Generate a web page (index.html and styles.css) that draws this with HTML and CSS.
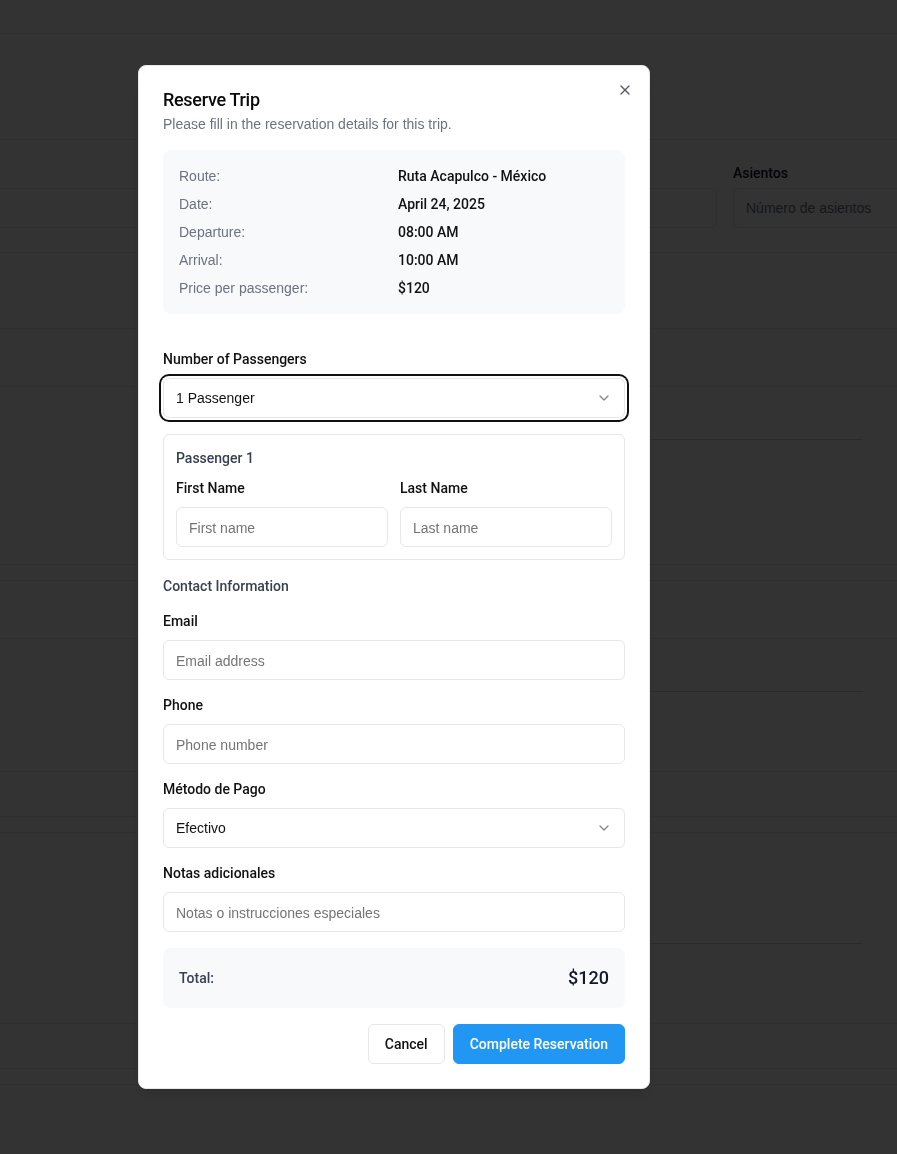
FILE: index.html
```html
<!DOCTYPE html>
<html lang="en">
<head>
<meta charset="utf-8">
<title>Reserve Trip</title>
<link rel="stylesheet" href="styles.css">
</head>
<body>
<div class="page">
  <header class="topbar"></header>
  <section class="hero"></section>
  <section class="filters">
    <div class="filter-grid">
      <div class="filter-field">
        <span class="filter-label"></span>
        <div class="filter-input"></div>
      </div>
      <div class="filter-field">
        <span class="filter-label"></span>
        <div class="filter-input"></div>
      </div>
      <div class="filter-field">
        <span class="filter-label">Asientos</span>
        <div class="filter-input"><span class="filter-ph">Número de asientos</span></div>
      </div>
    </div>
  </section>
  <div class="trip-list">
    <article class="trip">
      <div class="trip-head"></div>
      <div class="trip-body"></div>
      <div class="trip-divider"></div>
      <div class="trip-main trip-main-plain"></div>
      <div class="trip-foot"></div>
    </article>
    <article class="trip">
      <div class="trip-head"></div>
      <div class="trip-body"></div>
      <div class="trip-divider"></div>
      <div class="trip-main"></div>
      <div class="trip-foot"></div>
    </article>
    <article class="trip">
      <div class="trip-head trip-head-plain"></div>
      <div class="trip-body"></div>
      <div class="trip-divider"></div>
      <div class="trip-main"></div>
      <div class="trip-foot"></div>
    </article>
    <article class="trip trip-last">
      <div class="trip-head trip-head-plain"></div>
    </article>
  </div>
</div>

<div class="overlay">
  <div class="modal" role="dialog" aria-labelledby="dlg-title">
    <button class="close" aria-label="Close">
      <svg width="16" height="16" viewBox="0 0 24 24" fill="none" stroke="currentColor" stroke-width="2" stroke-linecap="round" stroke-linejoin="round"><path d="M18 6 6 18"/><path d="m6 6 12 12"/></svg>
    </button>
    <h2 class="title" id="dlg-title">Reserve Trip</h2>
    <p class="desc">Please fill in the reservation details for this trip.</p>

    <div class="info">
      <span class="info-label">Route:</span><span class="info-value">Ruta Acapulco - México</span>
      <span class="info-label">Date:</span><span class="info-value">April 24, 2025</span>
      <span class="info-label">Departure:</span><span class="info-value">08:00 AM</span>
      <span class="info-label">Arrival:</span><span class="info-value">10:00 AM</span>
      <span class="info-label">Price per passenger:</span><span class="info-value">$120</span>
    </div>

    <div class="field field-passengers">
      <label class="label">Number of Passengers</label>
      <div class="select focused">
        <span>1 Passenger</span>
        <svg class="chev" width="16" height="16" viewBox="0 0 24 24" fill="none" stroke="currentColor" stroke-width="2" stroke-linecap="round" stroke-linejoin="round"><path d="m6 9 6 6 6-6"/></svg>
      </div>
    </div>

    <div class="passenger">
      <div class="passenger-title">Passenger 1</div>
      <div class="name-grid">
        <div>
          <label class="label">First Name</label>
          <input class="input" placeholder="First name">
        </div>
        <div>
          <label class="label">Last Name</label>
          <input class="input" placeholder="Last name">
        </div>
      </div>
    </div>

    <div class="section-title">Contact Information</div>

    <div class="field">
      <label class="label">Email</label>
      <input class="input" placeholder="Email address">
    </div>
    <div class="field">
      <label class="label">Phone</label>
      <input class="input" placeholder="Phone number">
    </div>
    <div class="field">
      <label class="label">Método de Pago</label>
      <div class="select">
        <span>Efectivo</span>
        <svg class="chev" width="16" height="16" viewBox="0 0 24 24" fill="none" stroke="currentColor" stroke-width="2" stroke-linecap="round" stroke-linejoin="round"><path d="m6 9 6 6 6-6"/></svg>
      </div>
    </div>
    <div class="field">
      <label class="label">Notas adicionales</label>
      <input class="input" placeholder="Notas o instrucciones especiales">
    </div>

    <div class="total">
      <span class="total-label">Total:</span>
      <span class="total-value">$120</span>
    </div>

    <div class="actions">
      <button class="btn btn-outline">Cancel</button>
      <button class="btn btn-primary">Complete Reservation</button>
    </div>
  </div>
</div>
</body>
</html>
```
FILE: styles.css
```css
* { box-sizing: border-box; }

html, body {
  margin: 0;
  height: 100%;
}

body {
  font-family: "Liberation Sans", Arial, sans-serif;
  font-size: 14px;
  line-height: 20px;
  color: #111827;
  background: #ffffff;
  overflow: hidden;
}

/* ---------- background page ---------- */
.page { width: 100%; }

.topbar {
  height: 34px;
  border-bottom: 1px solid #e5e7eb;
}

.hero {
  height: 106px;
  border-bottom: 1px solid #e5e7eb;
}

.filters {
  height: 113px;
  border-bottom: 1px solid #e5e7eb;
  overflow: hidden;
  padding-top: 23px;
}

.filter-grid {
  width: 953px;
  margin-left: -20px;
  display: grid;
  grid-template-columns: 1fr 1fr 200px;
  gap: 16px;
}

.filter-label {
  display: block;
  height: 20px;
  font-family: Roboto, "Liberation Sans", sans-serif;
  font-weight: 500;
  color: #111827;
  margin-bottom: 5px;
}

.filter-input {
  height: 40px;
  border: 1px solid #e5e7eb;
  border-radius: 6px;
  padding: 0 12px;
  display: flex;
  align-items: center;
}

.filter-ph { color: #6b7280; }

.trip-list { padding-top: 75px; }

.trip {
  border-top: 1px solid #e5e7eb;
  border-bottom: 1px solid #e5e7eb;
  margin-bottom: 15px;
}

.trip-last { border-bottom: 0; }

.trip-head {
  height: 58px;
  border-bottom: 1px solid #e5e7eb;
}

.trip-head-plain { border-bottom-color: transparent; }

.trip-body { height: 52px; }

.trip-divider {
  height: 1px;
  margin: 0 34px 0 320px;
  background: #cfd3d9;
}

.trip-main {
  height: 80px;
  border-bottom: 1px solid #e5e7eb;
}

.trip-main-plain { border-bottom-color: transparent; }

.trip-foot { height: 44px; }

/* ---------- overlay & dialog ---------- */
.overlay {
  position: fixed;
  inset: 0;
  background: rgba(0, 0, 0, 0.8);
  padding: 65px 0 0 138px;
}

.modal {
  position: relative;
  width: 512px;
  background: #ffffff;
  border: 1px solid #e5e7eb;
  border-radius: 8px;
  padding: 24px;
  box-shadow: 0 10px 15px -3px rgba(0,0,0,.1), 0 4px 6px -4px rgba(0,0,0,.1);
}

.close {
  position: absolute;
  top: 16px;
  right: 16px;
  width: 16px;
  height: 16px;
  padding: 0;
  border: 0;
  background: none;
  color: #111827;
  opacity: 0.7;
  display: flex;
}

.title {
  margin: 0;
  font-family: Roboto, "Liberation Sans", sans-serif;
  font-size: 18px;
  line-height: 20px;
  font-weight: 500;
  letter-spacing: -0.3px;
  color: #0a0a0a;
}

.desc {
  margin: 4px 0 0;
  color: #6b7280;
}

.info {
  margin-top: 16px;
  background: #f8f9fb;
  border-radius: 8px;
  padding: 16px;
  display: grid;
  grid-template-columns: 1fr 1fr;
  gap: 8px;
}

.info-label { color: #6b7280; }

.info-value {
  font-family: Roboto, "Liberation Sans", sans-serif;
  font-weight: 500;
  color: #111111;
}

.label {
  display: block;
  margin-bottom: 9px;
  font-family: Roboto, "Liberation Sans", sans-serif;
  font-weight: 500;
  color: #111111;
}

.field { margin-top: 15px; }

.field-passengers { margin-top: 35px; }

.select {
  height: 40px;
  border: 1px solid #e5e7eb;
  border-radius: 6px;
  padding: 0 12px;
  display: flex;
  align-items: center;
  justify-content: space-between;
  background: #fff;
  color: #111111;
}

.select.focused {
  box-shadow: 0 0 0 2px #ffffff, 0 0 0 4px #101010;
}

.chev {
  color: #111;
  opacity: 0.5;
  flex: none;
}

.input {
  display: block;
  width: 100%;
  height: 40px;
  border: 1px solid #e5e7eb;
  border-radius: 6px;
  padding: 1px 12px 0;
  font-family: "Liberation Sans", Arial, sans-serif;
  font-size: 14px;
  color: #111111;
  background: #fff;
  outline: none;
}

.input::placeholder { color: #757575; }

.passenger {
  margin-top: 16px;
  border: 1px solid #e5e7eb;
  border-radius: 6px;
  padding: 13px 12px 12px;
}

.passenger-title {
  margin-bottom: 10px;
  font-family: Roboto, "Liberation Sans", sans-serif;
  font-weight: 500;
  color: #374151;
}

.name-grid {
  display: grid;
  grid-template-columns: 1fr 1fr;
  gap: 12px;
}

.section-title {
  margin-top: 16px;
  font-family: Roboto, "Liberation Sans", sans-serif;
  font-weight: 500;
  color: #374151;
}

.total {
  margin-top: 16px;
  background: #f8f9fb;
  border-radius: 8px;
  padding: 16px;
  display: flex;
  align-items: center;
  justify-content: space-between;
}

.total-label {
  font-family: Roboto, "Liberation Sans", sans-serif;
  font-weight: 500;
  color: #374151;
}

.total-value {
  font-family: Roboto, "Liberation Sans", sans-serif;
  font-weight: 500;
  font-size: 18px;
  line-height: 28px;
  color: #111827;
}

.actions {
  margin-top: 16px;
  display: flex;
  justify-content: flex-end;
  gap: 8px;
}

.btn {
  height: 40px;
  padding: 0 16px;
  border-radius: 6px;
  font-family: Roboto, "Liberation Sans", sans-serif;
  font-weight: 500;
  font-size: 14px;
}

.btn-outline {
  background: #ffffff;
  border: 1px solid #e5e7eb;
  color: #111111;
}

.btn-primary {
  background: #2196f3;
  border: 1px solid #2196f3;
  color: #ffffff;
}
```
